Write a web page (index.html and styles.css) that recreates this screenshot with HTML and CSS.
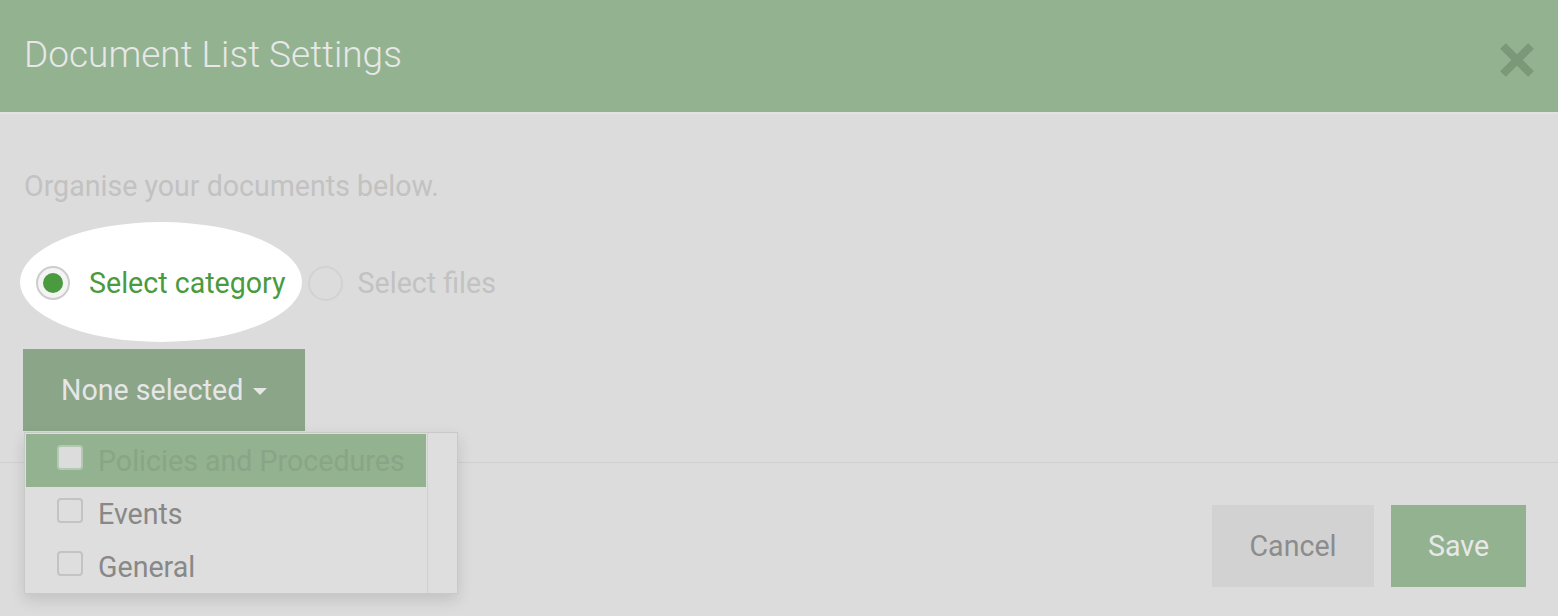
FILE: index.html
```html
<!DOCTYPE html>
<html lang="en">
<head>
    <meta charset="UTF-8">
    <meta name="viewport" content="width=device-width, initial-scale=1.0">
    <title>Document List Settings</title>
    <link rel="stylesheet" href="styles.css">
</head>
<body>
    <div class="modal">
        <div class="modal-header">
            <h1>Document List Settings</h1>
            <svg class="close" width="36" height="36" viewBox="0 0 36 36">
                <path d="M4 4 L32 32 M32 4 L4 32" stroke="#7b9878" stroke-width="8" fill="none"/>
            </svg>
        </div>

        <div class="modal-body">
            <p class="intro">Organise your documents below.</p>

            <div class="radio-row">
                <div class="spotlight"></div>
                <label class="radio checked">
                    <span class="radio-dot"></span>Select category
                </label>
                <label class="radio">
                    <span class="radio-dot"></span>Select files
                </label>
            </div>

            <div class="dropdown">
                <button class="dropdown-toggle">None selected<span class="caret"></span></button>
                <ul class="dropdown-menu">
                    <li class="active"><span class="box"></span>Policies and Procedures</li>
                    <li><span class="box"></span>Events</li>
                    <li><span class="box"></span>General</li>
                </ul>
            </div>
        </div>

        <div class="modal-footer">
            <button class="btn btn-cancel">Cancel</button>
            <button class="btn btn-save">Save</button>
        </div>
    </div>
</body>
</html>
```

FILE: styles.css
```css
body {
    margin: 0;
    background-color: #dcdcdc;
    font-family: Roboto, 'Liberation Sans', sans-serif;
    height: 616px;
    overflow: hidden;
}

.modal-header {
    height: 112px;
    background-color: #93b290;
    border-bottom: 2px solid #e2e2e2;
    display: flex;
    align-items: center;
    justify-content: space-between;
    padding: 0 23px 0 24px;
}

.modal-header h1 {
    margin: 0;
    font-size: 37px;
    font-weight: 300;
    color: #e8e8e8;
    margin-top: -4px;
}

.close {
    margin-top: 8px;
}

.modal-body {
    padding: 56px 24px 0;
    height: 292px;
    border-bottom: 1px solid #d0d0d0;
}

.intro {
    margin: 0;
    font-size: 28.6px;
    line-height: 32px;
    color: #c2c2c2;
}

.radio-row {
    position: relative;
    display: flex;
    align-items: center;
    margin-top: 41px;
    height: 80px;
    padding-left: 12px;
}

.spotlight {
    position: absolute;
    left: -4px;
    top: -21px;
    width: 282px;
    height: 120px;
    border-radius: 50%;
    background-color: #ffffff;
}

.radio {
    position: relative;
    display: flex;
    align-items: center;
    gap: 15px;
    font-size: 28.6px;
    color: #c2c2c2;
}

.radio.checked {
    color: #4a9a40;
    gap: 19px;
    margin-right: 22px;
}

.radio-dot {
    width: 35px;
    height: 35px;
    border-radius: 50%;
    border: 2px solid #d2d2d2;
    box-sizing: border-box;
    display: flex;
    align-items: center;
    justify-content: center;
}

.radio.checked .radio-dot {
    width: 34px;
    height: 34px;
    border-color: #cdcdcd;
    background-color: #f4f4f4;
}

.radio.checked .radio-dot::after {
    content: "";
    width: 20px;
    height: 20px;
    border-radius: 50%;
    background-color: #4a9a40;
}

.dropdown {
    position: relative;
    margin-top: 26px;
    margin-left: -1px;
}

.dropdown-toggle {
    display: flex;
    align-items: center;
    width: 282px;
    height: 82px;
    border: none;
    background-color: #8aa587;
    color: #e6e6e6;
    font-family: Roboto, 'Liberation Sans', sans-serif;
    font-size: 28.6px;
    padding: 0 0 0 38px;
}

.caret {
    display: inline-block;
    border-left: 7px solid transparent;
    border-right: 7px solid transparent;
    border-top: 7px solid #e6e6e6;
    margin-left: 10px;
    margin-top: 2px;
}

.dropdown-menu {
    position: absolute;
    left: 1px;
    top: 83px;
    width: 434px;
    height: 162px;
    margin: 0;
    padding: 1px 31px 0 1px;
    box-sizing: border-box;
    list-style: none;
    background-color: #dedede;
    border: 1px solid #c9c9c9;
    box-shadow: 0 6px 14px rgba(0, 0, 0, 0.12);
}

.dropdown-menu::after {
    content: "";
    position: absolute;
    right: 29px;
    top: 0;
    bottom: 0;
    border-left: 1px solid #cfcfcf;
}

.dropdown-menu li {
    height: 53px;
    display: flex;
    align-items: center;
    padding-left: 31px;
    font-size: 28.6px;
    color: #888888;
}

.dropdown-menu li.active {
    background-color: #93b290;
    color: #89a586;
}

.box {
    width: 26px;
    height: 25px;
    border: 2px solid #c3c3c3;
    border-radius: 4px;
    box-sizing: border-box;
    margin-right: 15px;
    margin-top: -7px;
    background-color: #dedede;
}

.active .box {
    background-color: #dcdcdc;
    border-color: #b5c8b3;
}

.modal-footer {
    display: flex;
    justify-content: flex-end;
    gap: 17px;
    padding: 42px 32px 0;
}

.btn {
    height: 82px;
    border: none;
    font-family: Roboto, 'Liberation Sans', sans-serif;
    font-size: 28.6px;
}

.btn-cancel {
    width: 162px;
    background-color: #d2d2d2;
    color: #8c8c8c;
}

.btn-save {
    width: 135px;
    background-color: #93b290;
    color: #e8e8e8;
}
```
